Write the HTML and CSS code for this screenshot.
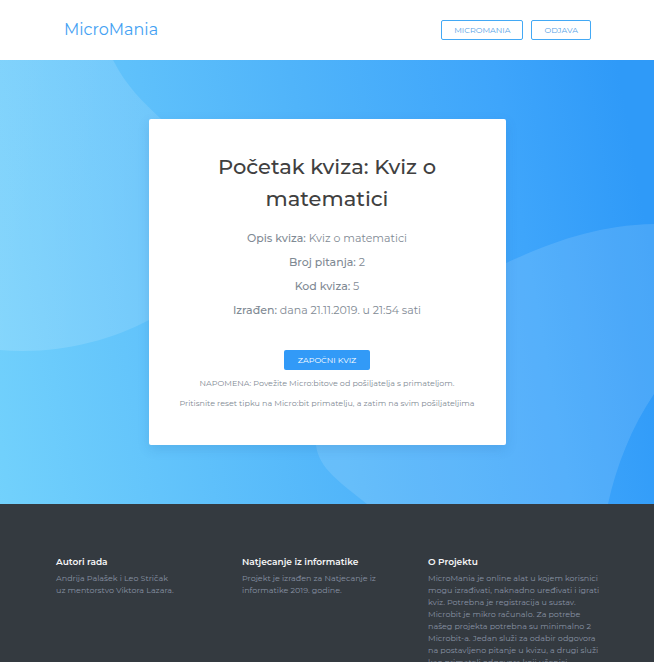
FILE: index.html
```html
<!DOCTYPE html>
<html lang="hr">
<head>
<meta charset="utf-8">
<meta name="viewport" content="width=device-width, initial-scale=1">
<title>MicroMania</title>
<link rel="stylesheet" href="styles.css">
</head>
<body>
<header class="site-header">
  <a class="brand" href="#">MicroMania</a>
  <nav class="nav">
    <a class="nav-link" href="#">MICROMANIA</a>
    <a class="nav-link" href="#">ODJAVA</a>
  </nav>
</header>
<main class="hero">
  <svg class="hero-shapes" viewBox="0 0 654 444" preserveAspectRatio="none" aria-hidden="true">
    <defs>
      <linearGradient id="leftShape" x1="0" x2="1">
        <stop offset="0" stop-color="#fff" stop-opacity=".15"/>
        <stop offset="1" stop-color="#fff" stop-opacity=".11"/>
      </linearGradient>
    </defs>
    <path fill="url(#leftShape)" d="M0 0H113C126 26 144 43 160 58C192 88 203 115 198 150C193 196 178 245 149 260C110 281 55 295 0 290Z"/>
    <path fill="#fff" fill-opacity=".12" d="M654 164C596 165 550 183 506 203C455 230 430 257 402 287C365 329 317 349 316 385C319 409 340 422 367 444H608C616 407 632 366 654 334Z"/>
  </svg>
  <section class="card">
    <h1 class="title">Početak kviza: Kviz o matematici</h1>
    <div class="details">
      <p><strong>Opis kviza:</strong> Kviz o matematici</p>
      <p><strong>Broj pitanja:</strong> 2</p>
      <p><strong>Kod kviza:</strong> 5</p>
      <p><strong>Izrađen:</strong> dana 21.11.2019. u 21:54 sati</p>
    </div>
    <button class="start" type="button">ZAPOČNI KVIZ</button>
    <div class="notes">
      <p>NAPOMENA: Povežite Micro:bitove od pošiljatelja s primateljom.</p>
      <p>Pritisnite reset tipku na Micro:bit primatelju, a zatim na svim pošiljateljima</p>
    </div>
  </section>
</main>
<footer class="site-footer">
  <section class="column">
    <h2>Autori rada</h2>
    <p>Andrija Palašek i Leo Stričak<br>uz mentorstvo Viktora Lazara.</p>
  </section>
  <section class="column">
    <h2>Natjecanje iz informatike</h2>
    <p>Projekt je izrađen za Natjecanje iz<br>informatike 2019. godine.</p>
  </section>
  <section class="column">
    <h2>O Projektu</h2>
    <p>MicroMania je online alat u kojem korisnici<br>mogu izrađivati, naknadno uređivati i igrati<br>kviz. Potrebna je registracija u sustav.<br>Microbit je mikro računalo. Za potrebe<br>našeg projekta potrebna su minimalno 2<br>Microbit-a. Jedan služi za odabir odgovora<br>na postavljeno pitanje u kvizu, a drugi služi<br>kao primatelj odgovora koji učenici</p>
  </section>
</footer>
</body>
</html>
```
FILE: styles.css
```css
* {
  box-sizing: border-box;
}

body {
  margin: 0;
  background: #343a40;
  color: #7f8a94;
  font-family: Montserrat, Inter, "Liberation Sans", sans-serif;
  font-size: 11px;
}

h1, h2, p {
  margin: 0;
}

a {
  text-decoration: none;
}

.site-header {
  display: flex;
  align-items: center;
  justify-content: space-between;
  height: 60px;
  padding: 0 63px 0 64px;
  background: #fff;
}

.brand {
  color: #43a1f3;
  font-size: 16px;
  line-height: 24px;
}

.nav {
  display: flex;
  gap: 8px;
}

.nav-link {
  padding: 0 12px;
  border: 1px solid #43a9f5;
  border-radius: 2px;
  color: #559fe6;
  font-size: 8px;
  line-height: 18px;
}

.hero {
  position: relative;
  display: flex;
  justify-content: center;
  padding: 59px 16px;
  background: linear-gradient(80deg, #72d1fc 0%, #50b4fa 50%, #3ea5fb 78%, #2f9af8 95%);
}

.hero-shapes {
  position: absolute;
  inset: 0;
  width: 100%;
  height: 100%;
}

.card {
  position: relative;
  display: flex;
  flex-direction: column;
  align-items: center;
  width: 357px;
  max-width: 100%;
  padding: 32px;
  border-radius: 2px;
  background: #fff;
  box-shadow: 0 4px 12px rgba(30, 90, 150, .16);
  text-align: center;
}

.title {
  max-width: 260px;
  color: #404040;
  font-size: 21px;
  font-weight: 500;
  line-height: 32px;
}

.details {
  margin-top: 11px;
  line-height: 24px;
}

.details strong {
  font-weight: 500;
}

.start {
  margin-top: 28px;
  padding: 0 14px;
  border: 0;
  border-radius: 2px;
  background: #329af7;
  color: #fff;
  font-family: inherit;
  font-size: 8px;
  line-height: 20px;
}

.notes {
  margin-top: 3px;
  font-size: 8px;
  line-height: 20px;
  white-space: nowrap;
}

.site-footer {
  display: grid;
  grid-template-columns: repeat(3, minmax(0, 1fr));
  padding: 50px 48px 0;
  background: #343a40;
  color: #8892a4;
  font-size: 8px;
  line-height: 12px;
}

.column {
  padding: 0 0 0 8px;
}

.column h2 {
  margin-bottom: 2px;
  color: #f4f5f6;
  font-size: 9px;
  font-weight: 600;
  line-height: 16px;
}

.column p {
  white-space: nowrap;
}
```
